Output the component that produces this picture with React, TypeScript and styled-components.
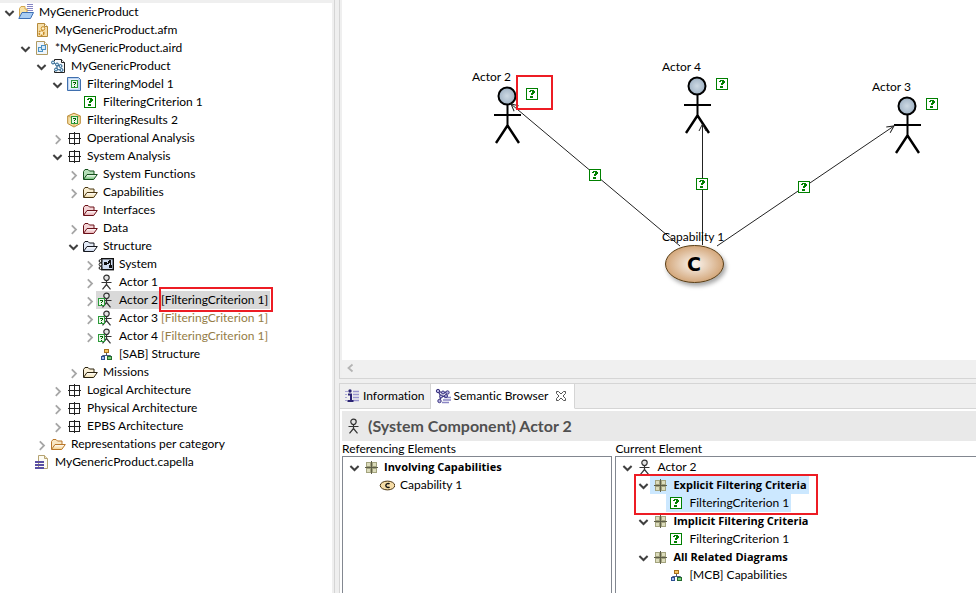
import React, { useId } from "react";
import styled, { createGlobalStyle, css } from "styled-components";

const GlobalStyle = createGlobalStyle`
  *, *::before, *::after { box-sizing: border-box; }
  body {
    margin: 0;
    background: #efefef;
    color: #000;
    font-family: Lato, "Open Sans", sans-serif;
    font-size: 12px;
    line-height: 18px;
    font-variant-ligatures: none;
  }
`;

/* ---------- layout ---------- */

const Workbench = styled.div`
  display: flex;
  min-height: 100vh;
  overflow: hidden;
`;

const Explorer = styled.nav`
  flex: 0 0 335px;
  padding: 3px 2px 0 0;
  border-right: 1px solid #d5d5d5;
  display: flex;
`;

const ExplorerBody = styled.div`
  flex: 1;
  background: #fff;
`;

const Main = styled.main`
  flex: 1;
  min-width: 0;
  margin-left: 4px;
  display: flex;
  flex-direction: column;
  gap: 4px;
`;

const Editor = styled.section`
  flex: 1;
  display: flex;
  flex-direction: column;
  padding-left: 2px;
  border: solid #d5d5d5;
  border-width: 0 0 1px 1px;
`;

const Canvas = styled.div`
  flex: 1;
  min-height: 300px;
  background: #fff;
  overflow: hidden;

  svg {
    display: block;
  }
`;

const ScrollBar = styled.div`
  display: flex;
  align-items: center;
  height: 18px;
  padding: 0 0 2px 4px;
  background: #f0f0f0;
`;

const ViewStack = styled.section`
  border: solid #d5d5d5;
  border-width: 1px 0 0 1px;
  background: #fff;
`;

const TabStrip = styled.div`
  display: flex;
  height: 25px;
  background: #efefef;
`;

const TabSpace = styled.div`
  flex: 1;
  border-bottom: 1px solid #d5d5d5;
`;

const Tab = styled.div<{ $active?: boolean }>`
  display: flex;
  align-items: center;
  gap: 7px;
  padding: 0 5px 0 4px;
  border: solid #d5d5d5;
  border-width: 0 1px 1px 0;
  ${(p) =>
    p.$active &&
    css`
      padding-right: 7px;
      background: #fff;
      border-bottom-color: #fff;
    `}
`;

const PlainButton = styled.button`
  display: flex;
  align-items: center;
  padding: 0;
  border: 0;
  background: none;
  color: inherit;
  font: inherit;
  white-space: nowrap;
`;

const TabButton = styled(PlainButton)`
  gap: 3px;
`;

const ViewBody = styled.div`
  padding: 2px 0 0 2px;
`;

const Banner = styled.h1`
  display: flex;
  align-items: center;
  gap: 7px;
  height: 30px;
  margin: 0;
  padding-left: 3px;
  background: #e9e9e9;
  color: #505050;
  font-size: 16px;
  font-weight: 700;
`;

const Panes = styled.div`
  display: grid;
  grid-template-columns: 3fr 4fr;
  column-gap: 3px;
`;

const Pane = styled.section`
  display: flex;
  flex-direction: column;
  min-width: 0;
`;

const PaneTitle = styled.h2`
  margin: 0;
  height: 15px;
  font-size: 12px;
  font-weight: 400;
  line-height: 16px;
`;

const PaneTree = styled.div<{ $last?: boolean }>`
  flex: 1;
  padding: 1px 2px 10px;
  border: solid #828790;
  border-width: ${(p) => (p.$last ? "1px 0 0 1px" : "1px 1px 0 1px")};
`;

/* ---------- tree ---------- */

const TreeList = styled.ul`
  margin: 0;
  padding: 0;
  list-style: none;
`;

const Row = styled.li<{ $level: number }>`
  position: relative;
  display: flex;
  height: 18px;
  padding-left: ${(p) => p.$level * 16}px;
`;

const ToggleSlot = styled.span`
  flex: 0 0 16px;
  display: flex;
`;

const RowLabel = styled(PlainButton)<{ $tone?: "grey" | "blue"; $bold?: boolean }>`
  gap: 5px;
  padding: 0 2px;
  background: ${(p) =>
    p.$tone === "grey" ? "#d9d9d9" : p.$tone === "blue" ? "#cce8ff" : "transparent"};
  ${(p) =>
    p.$bold &&
    css`
      font-family: "Open Sans", sans-serif;
      font-size: 11px;
      font-weight: 700;
    `}
`;

const Decoration = styled.span<{ $selected: boolean }>`
  position: relative;
  color: ${(p) => (p.$selected ? "#000" : "#957d47")};
`;

const Outline = styled.span`
  position: absolute;
  border: 2px solid #ed1c24;
  pointer-events: none;
`;

const DecorationOutline = styled(Outline)`
  inset: -5px -5px -5px -2px;
`;

const PairOutline = styled(Outline)`
  top: -2px;
  left: 16px;
  width: 184px;
  height: 41px;
`;

/* ---------- icons ---------- */

const Icon = ({ children }: { children: React.ReactNode }) => (
  <svg width="16" height="16" viewBox="0 0 16 16" aria-hidden="true">
    {children}
  </svg>
);

const ChevronDown = () => (
  <Icon>
    <path d="M5.4 7 9.5 11l4.1-4" fill="none" stroke="#404040" strokeWidth="2" />
  </Icon>
);

const ChevronRight = () => (
  <Icon>
    <path d="M7.800 5.400 12 9.600l-4.200 4.200" fill="none" stroke="#a6a6a6" strokeWidth="1.800" />
  </Icon>
);

const MarkGlyph = ({ x, y }: { x: number; y: number }) => (
  <g transform={`translate(${x} ${y})`} shapeRendering="crispEdges">
    <rect width="12" height="12" fill="#008000" />
    <rect x="1" y="1" width="10" height="10" fill="#fff" />
    <path
      d="M4 2h4v1h-4zM3 3h2v1h-2zM6 3h3v2h-3zM5 5h3v1h-3zM5 6h2v1h-2zM4 8h3v2h-3z"
      fill="#008000"
    />
  </g>
);

const SmallMark = ({ x, y }: { x: number; y: number }) => (
  <g transform={`translate(${x} ${y})`} shapeRendering="crispEdges">
    <rect width="7" height="8" fill="#2c9a3a" />
    <rect x="1" y="1" width="5" height="6" fill="#e9f7e9" />
    <path d="M2 2h3v1h-3zM4 3h1v1h-1zM3 4h1v1h-1zM3 6h1v1h-1z" fill="#006000" />
  </g>
);

const FolderShape = ({ fill, line }: { fill: string; line: string }) => {
  const id = useId();
  return (
    <Icon>
      <defs>
        <linearGradient id={id} x1="0" y1="0" x2="0" y2="1">
          <stop offset="0" stopColor="#fff" />
          <stop offset="1" stopColor={fill} />
        </linearGradient>
      </defs>
      <path d="M1.5 13V5.5L3 3.5h3l1.5 1.5H12v3" fill={fill} fillOpacity=".5" stroke={line} />
      <path d="M1.5 13.5 5 8.5h10.3l-3.6 5z" fill={`url(#${id})`} stroke={line} strokeLinejoin="round" />
    </Icon>
  );
};

const person = (
  <g fill="none" stroke="#333" strokeWidth="1.2">
    <circle cx="8.5" cy="3.8" r="2.7" fill="#e4e4e4" />
    <path d="M8.5 6.5v4.5M3.5 8.5h10M8.5 10.5 4.5 15.3M8.5 10.5l4 4.8" />
  </g>
);

const icons = {
  project: (
    <Icon>
      <path d="M9 .5h6M9 2.5h6M9 4.5h6M9 6.500h6" stroke="#8585c4" />
      <path d="M1.500 13V4.500L3 2.500h4v2.500H9V8" fill="#f9e3a6" stroke="#d2a64e" />
      <path d="M.8 14.500 4 8.500h11.500l-3 6z" fill="#a9cdf3" stroke="#3c6fb5" strokeLinejoin="round" />
    </Icon>
  ),
  afm: (
    <Icon>
      <path d="M3.500 1.500h7l3 3v10h-10z" fill="#f6dfa9" stroke="#b58a3b" />
      <path d="M10.500 1.500v3h3" fill="#fff" stroke="#b58a3b" />
      <circle cx="9" cy="6.500" r="1.800" fill="#fff3d0" stroke="#c78a25" />
      <circle cx="7.500" cy="11" r="2.300" fill="#fff3d0" stroke="#c78a25" strokeWidth="1.600" strokeDasharray="1.600 .8" />
    </Icon>
  ),
  aird: (
    <Icon>
      <path d="M2.500 1.500h8l3 3v10h-11z" fill="#eef5fb" stroke="#b09a62" />
      <path d="M10.500 1.500v3h3" fill="#fff" stroke="#b09a62" />
      <rect x="4.500" y="7.500" width="4" height="4" fill="#d5e8f6" stroke="#4a90c2" />
      <rect x="7.500" y="5.500" width="4" height="4" fill="#d5e8f6" stroke="#4a90c2" />
    </Icon>
  ),
  model: (
    <Icon>
      <path d="M4.500 1.500h7l3 3v10h-10z" fill="#f4f7fa" stroke="#222" />
      <path d="M11.500 1.500v3h3" fill="#fff" stroke="#222" />
      <rect x="1" y="3" width="6" height="10" fill="#fff" />
      <g fill="#cfe6f5" stroke="#27618c">
        <path d="M3 4.500 7 7l4 1M7 7l0 4.500 4 .5" fill="none" />
        <circle cx="3" cy="4.500" r="1.500" />
        <circle cx="7" cy="6.500" r="1.500" />
        <circle cx="10.500" cy="8" r="1.500" />
        <circle cx="6" cy="11.500" r="1.500" />
        <circle cx="11.500" cy="12" r="1.500" />
      </g>
    </Icon>
  ),
  filterModel: (
    <Icon>
      <path d="M1.500 1.500h11l2 2v11h-13z" fill="#bcd4f1" stroke="#3f6fae" />
      <path d="M3 3h9v10H3z" fill="#e6f0fb" />
      <SmallMark x={5} y={4} />
    </Icon>
  ),
  criterion: (
    <Icon>
      <MarkGlyph x={2} y={2} />
    </Icon>
  ),
  results: (
    <Icon>
      <path d="M8 1.200 14.300 4v7.500L8 15 1.700 11.500V4z" fill="#f6dfa4" stroke="#b98a35" />
      <path d="M1.700 4 8 6.500 14.300 4M8 6.500V15" fill="none" stroke="#d2a95b" />
      <SmallMark x={5} y={4} />
    </Icon>
  ),
  arch: (
    <Icon>
      <path
        d="M3.500 3.500h10v10h-10zM8.500 2v13M2 8.500h13"
        fill="none"
        stroke="#222"
        shapeRendering="crispEdges"
      />
    </Icon>
  ),
  category: (
    <Icon>
      <g shapeRendering="crispEdges">
        <path d="M3.500 3.500h4v4h-4zM9.500 3.500h4v4h-4zM3.500 9.500h4v4h-4zM9.500 9.500h4v4h-4z" fill="#dcdcbc" stroke="#a3a37e" />
        <path d="M8.500 2v13M2 8.500h13" stroke="#5e5e48" />
      </g>
    </Icon>
  ),
  greenFolder: <FolderShape fill="#6cc172" line="#14501c" />,
  tanFolder: <FolderShape fill="#f0d9a0" line="#4a3610" />,
  redFolder: <FolderShape fill="#e8a9ae" line="#6a1018" />,
  blueFolder: <FolderShape fill="#c8d6ee" line="#16181f" />,
  missions: <FolderShape fill="#f3e0ac" line="#2a220e" />,
  goldFolder: <FolderShape fill="#f5cf85" line="#b9772a" />,
  system: (
    <Icon>
      <rect x="3.700" y="2.700" width="11.600" height="11" fill="#cfdcf2" stroke="#111" strokeWidth="1.400" />
      <g fill="#fff" stroke="#111">
        <circle cx="2.500" cy="5" r="1.400" />
        <circle cx="2.500" cy="8.500" r="1.400" />
        <circle cx="2.500" cy="12" r="1.400" />
      </g>
      <g shapeRendering="crispEdges">
        <path d="M6 6h3v3H6zM11 4h2v3h-2zM11 9h3v3h-3z" fill="#111" />
        <path d="M9 7.500h1.500V5.500h1M12.500 6v4" fill="none" stroke="#111" />
      </g>
    </Icon>
  ),
  actor: <Icon>{person}</Icon>,
  markedActor: (
    <Icon>
      {person}
      <SmallMark x={0} y={6} />
    </Icon>
  ),
  diagram: (
    <Icon>
      <path d="M8.500 6v3M4.500 11V9.500h8V11" fill="none" stroke="#4a5a7a" />
      <rect x="6.500" y="3.500" width="4" height="3" fill="#f6c662" stroke="#a8701c" />
      <rect x="3.500" y="10.500" width="3" height="3" fill="#a9c2f0" stroke="#2d4f94" />
      <rect x="9.500" y="10.500" width="4" height="3" fill="#7ccf7c" stroke="#246b2e" />
    </Icon>
  ),
  file: (
    <Icon>
      <path d="M4.500 1.500h6l3 3v10h-9z" fill="#fdfbf3" stroke="#b5a372" />
      <path d="M10.500 1.500v3h3" fill="#f2e6c0" stroke="#b5a372" />
      <path d="M1 8h9M1 11h9M1 14h9" stroke="#5a4fa3" strokeWidth="2" />
    </Icon>
  ),
  capability: (
    <Icon>
      <ellipse cx="8.500" cy="8.500" rx="7.300" ry="4.400" fill="#f5dca6" stroke="#4b3512" />
      <path d="M10.500 7.200C9.800 6.200 7 6.200 6.800 8.500c.2 2.300 3 2.300 3.700 1.300" fill="none" stroke="#111" strokeWidth="1.400" />
    </Icon>
  ),
  info: (
    <Icon>
      <path d="M9 3.500h6M9 6.500h6M9 9.500h6M9 12.500h6" stroke="#9a96cf" strokeWidth="1.600" />
      <path d="M1 3.500h3M1 6.500h2M1 9.500h2M1 12.500h2" stroke="#a9a6d6" />
      <path d="M4 6.500h3v6M3.500 13h6" fill="none" stroke="#2b2474" strokeWidth="2" />
      <circle cx="6" cy="3" r="1.700" fill="#2b2474" />
    </Icon>
  ),
  browser: (
    <Icon>
      <path d="M9 9.500h7M8 12h8M7 14.500h7" stroke="#8b86c4" strokeWidth="1.400" />
      <path d="M3 3 6 8.500 4.500 13M3 3l5 2 4-1M6 8.500 11 8" fill="none" stroke="#3b3580" strokeWidth="1.300" />
      <g fill="#b7b3e2" stroke="#3b3580">
        <circle cx="3" cy="3" r="1.700" />
        <circle cx="8" cy="4.500" r="1.500" />
        <circle cx="12.500" cy="4.500" r="1.700" />
        <circle cx="6" cy="8.500" r="1.500" />
        <circle cx="4.500" cy="13" r="1.700" />
        <circle cx="11" cy="8" r="1.500" />
      </g>
    </Icon>
  ),
};

/* ---------- tree data ---------- */

type Node = {
  level: number;
  text: string;
  icon: keyof typeof icons;
  open?: boolean;
  note?: string;
  tone?: "grey" | "blue";
  bold?: boolean;
  pair?: boolean;
};

const explorerNodes: Node[] = [
  { level: 0, text: "MyGenericProduct", icon: "project", open: true },
  { level: 1, text: "MyGenericProduct.afm", icon: "afm" },
  { level: 1, text: "*MyGenericProduct.aird", icon: "aird", open: true },
  { level: 2, text: "MyGenericProduct", icon: "model", open: true },
  { level: 3, text: "FilteringModel 1", icon: "filterModel", open: true },
  { level: 4, text: "FilteringCriterion 1", icon: "criterion" },
  { level: 3, text: "FilteringResults 2", icon: "results" },
  { level: 3, text: "Operational Analysis", icon: "arch", open: false },
  { level: 3, text: "System Analysis", icon: "arch", open: true },
  { level: 4, text: "System Functions", icon: "greenFolder", open: false },
  { level: 4, text: "Capabilities", icon: "tanFolder", open: false },
  { level: 4, text: "Interfaces", icon: "redFolder" },
  { level: 4, text: "Data", icon: "redFolder", open: false },
  { level: 4, text: "Structure", icon: "blueFolder", open: true },
  { level: 5, text: "System", icon: "system", open: false },
  { level: 5, text: "Actor 1", icon: "actor", open: false },
  { level: 5, text: "Actor 2", icon: "markedActor", open: false, note: "[FilteringCriterion 1]", tone: "grey" },
  { level: 5, text: "Actor 3", icon: "markedActor", open: false, note: "[FilteringCriterion 1]" },
  { level: 5, text: "Actor 4", icon: "markedActor", open: false, note: "[FilteringCriterion 1]" },
  { level: 5, text: "[SAB] Structure", icon: "diagram" },
  { level: 4, text: "Missions", icon: "missions", open: false },
  { level: 3, text: "Logical Architecture", icon: "arch", open: false },
  { level: 3, text: "Physical Architecture", icon: "arch", open: false },
  { level: 3, text: "EPBS Architecture", icon: "arch", open: false },
  { level: 2, text: "Representations per category", icon: "goldFolder", open: false },
  { level: 1, text: "MyGenericProduct.capella", icon: "file" },
];

const referencingNodes: Node[] = [
  { level: 0, text: "Involving Capabilities", icon: "category", open: true, bold: true },
  { level: 1, text: "Capability 1", icon: "capability" },
];

const currentNodes: Node[] = [
  { level: 0, text: "Actor 2", icon: "actor", open: true },
  { level: 1, text: "Explicit Filtering Criteria", icon: "category", open: true, bold: true, tone: "blue", pair: true },
  { level: 2, text: "FilteringCriterion 1", icon: "criterion", tone: "blue" },
  { level: 1, text: "Implicit Filtering Criteria", icon: "category", open: true, bold: true },
  { level: 2, text: "FilteringCriterion 1", icon: "criterion" },
  { level: 1, text: "All Related Diagrams", icon: "category", open: true, bold: true },
  { level: 2, text: "[MCB] Capabilities", icon: "diagram" },
];

const Tree = ({ nodes, label }: { nodes: Node[]; label: string }) => (
  <TreeList aria-label={label}>
    {nodes.map((n, i) => (
      <Row key={i} $level={n.level}>
        <ToggleSlot>
          {n.open !== undefined && (
            <PlainButton aria-label={`Toggle ${n.text}`} aria-expanded={n.open}>
              {n.open ? <ChevronDown /> : <ChevronRight />}
            </PlainButton>
          )}
        </ToggleSlot>
        <RowLabel $tone={n.tone} $bold={n.bold}>
          {icons[n.icon]}
          <span>
            {n.text}
            {n.note && (
              <>
                {" "}
                <Decoration $selected={n.tone === "grey"}>
                  {n.note}
                  {n.tone === "grey" && <DecorationOutline />}
                </Decoration>
              </>
            )}
          </span>
        </RowLabel>
        {n.pair && <PairOutline />}
      </Row>
    ))}
  </TreeList>
);

/* ---------- diagram ---------- */

const DiagramActor = ({ x, y, name }: { x: number; y: number; name: string }) => (
  <g transform={`translate(${x} ${y})`}>
    <text x="-35" y="-15">
      {name}
    </text>
    <g stroke="#000" strokeWidth="2" fill="none">
      <circle cx="0" cy="0" r="8.500" fill="url(#head)" />
      <path d="M.5 9v22" />
      <path d="M-13 19h27" />
      <path d="M.5 29.500-11 47M.5 29.500 12 47" strokeWidth="2.400" />
    </g>
    <MarkGlyph x={19} y={-8} />
  </g>
);

const Diagram = () => (
  <svg width="634" height="360" viewBox="0 0 634 360" role="img" aria-label="Capability diagram" fontSize="12">
    <defs>
      <radialGradient id="head">
        <stop offset="0" stopColor="#cdd9e3" />
        <stop offset="1" stopColor="#9fb2c4" />
      </radialGradient>
      <radialGradient id="oval">
        <stop offset="0" stopColor="#fbf6f1" />
        <stop offset="1" stopColor="#d3a679" />
      </radialGradient>
      <filter id="shade" x="-20%" y="-20%" width="150%" height="160%">
        <feDropShadow dx="2" dy="3" stdDeviation="2" floodColor="#000" floodOpacity=".35" />
      </filter>
      <marker id="arrow" markerWidth="10" markerHeight="10" refX="8" refY="4.500" orient="auto" markerUnits="userSpaceOnUse">
        <path d="M1 1 8 4.500 1 8" fill="none" stroke="#222" />
      </marker>
    </defs>
    <DiagramActor x={165} y={96} name="Actor 2" />
    <DiagramActor x={355} y={86} name="Actor 4" />
    <DiagramActor x={565} y={106} name="Actor 3" />
    <g stroke="#222" fill="none">
      <path d="M338 246 169 104" markerEnd="url(#arrow)" />
      <path d="M360.500 245V124" markerEnd="url(#arrow)" />
      <path d="M375 246 552 126" markerEnd="url(#arrow)" />
    </g>
    <MarkGlyph x={247} y={169} />
    <MarkGlyph x={354} y={178} />
    <MarkGlyph x={456} y={181} />
    <text x="320" y="241">
      Capability 1
    </text>
    <ellipse cx="352.500" cy="264" rx="29" ry="18.500" fill="url(#oval)" stroke="#5b3f17" filter="url(#shade)" />
    <text x="352" y="271" textAnchor="middle" fontFamily="DejaVu Sans, sans-serif" fontSize="19" fontWeight="700">
      C
    </text>
    <rect x="175" y="76" width="35" height="33" fill="none" stroke="#ed1c24" strokeWidth="2" />
  </svg>
);

export default function App() {
  return (
    <>
      <GlobalStyle />
      <Workbench>
        <Explorer aria-label="Project Explorer">
          <ExplorerBody>
            <Tree nodes={explorerNodes} label="Project" />
          </ExplorerBody>
        </Explorer>
        <Main>
          <Editor>
            <Canvas>
              <Diagram />
            </Canvas>
            <ScrollBar>
              <PlainButton aria-label="Scroll left">
                <svg width="8" height="10" viewBox="0 0 8 10" aria-hidden="true">
                  <path d="M6.500 1.500 2.500 5l4 3.500" fill="none" stroke="#b4b4b4" strokeWidth="1.800" />
                </svg>
              </PlainButton>
            </ScrollBar>
          </Editor>
          <ViewStack>
            <TabStrip>
              <Tab>
                <TabButton>
                  {icons.info}
                  Information
                </TabButton>
              </Tab>
              <Tab $active>
                <TabButton>
                  {icons.browser}
                  Semantic Browser
                </TabButton>
                <PlainButton aria-label="Close Semantic Browser">
                  <svg width="12" height="12" viewBox="0 0 12 12" aria-hidden="true">
                    <path
                      d="M1.500 1.500h2L6 4l2.500-2.500h2v2L8 6l2.500 2.500v2h-2L6 8l-2.500 2.500h-2v-2L4 6 1.500 3.500z"
                      fill="#fff"
                      stroke="#555"
                    />
                  </svg>
                </PlainButton>
              </Tab>
              <TabSpace />
            </TabStrip>
            <ViewBody>
              <Banner>
                {icons.actor}
                (System Component) Actor 2
              </Banner>
              <Panes>
                <Pane>
                  <PaneTitle>Referencing Elements</PaneTitle>
                  <PaneTree>
                    <Tree nodes={referencingNodes} label="Referencing Elements" />
                  </PaneTree>
                </Pane>
                <Pane>
                  <PaneTitle>Current Element</PaneTitle>
                  <PaneTree $last>
                    <Tree nodes={currentNodes} label="Current Element" />
                  </PaneTree>
                </Pane>
              </Panes>
            </ViewBody>
          </ViewStack>
        </Main>
      </Workbench>
    </>
  );
}
